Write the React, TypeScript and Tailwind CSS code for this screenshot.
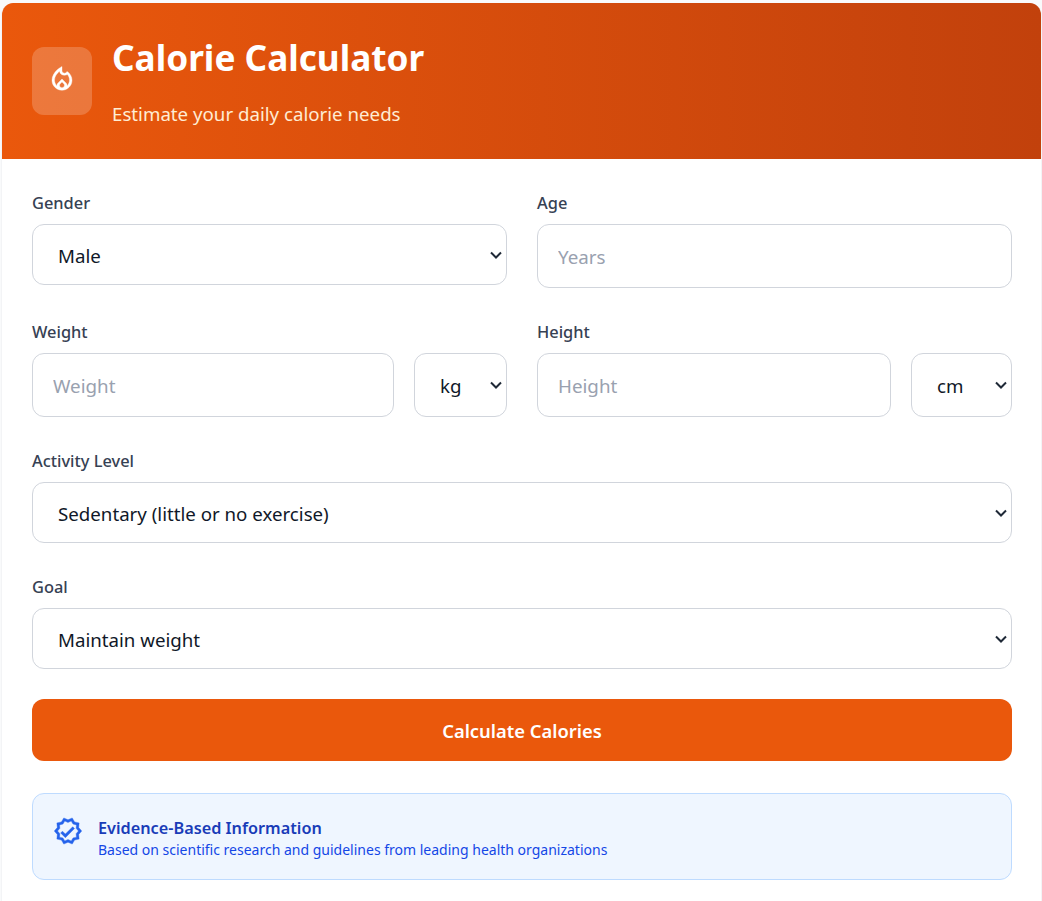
const labelClass = "block mb-[9px] text-[16.4px] leading-6 font-medium text-gray-700";
const fieldClass =
  "w-full h-16 rounded-xl border border-gray-300 bg-white px-5 pt-px text-[18.8px] text-gray-900 placeholder:text-gray-400 outline-none";

function Select({ options, className }: { options: string[]; className: string }) {
  return (
    <div className={"relative shrink-0 " + className}>
      <select className="w-full h-full appearance-none rounded-xl border border-gray-300 bg-white pl-[25px] pr-6 pt-[3px] text-[18.7px] text-gray-900 outline-none">
        {options.map((o) => (
          <option key={o}>{o}</option>
        ))}
      </select>
      <svg
        className="absolute right-[5px] top-1/2 -mt-[4px] pointer-events-none"
        width="12"
        height="8"
        viewBox="0 0 12 8"
        fill="none"
        stroke="#1f2937"
        strokeWidth="2"
      >
        <path d="M1 1.5l5 5 5-5" />
      </svg>
    </div>
  );
}

function FlameIcon() {
  return (
    <svg className="w-[30px] h-[30px] -mt-[5px]" viewBox="0 0 24 24" fill="#fff" stroke="#fff" strokeWidth="0.3">
      <path d="M16 6l-.44.55C14.38 8.02 12 7.19 12 5.3V2S4 6 4 13c0 4.42 3.58 8 8 8s8-3.58 8-8c0-2.96-1.61-5.62-4-7zm-4 13c-1.1 0-2-.87-2-1.94 0-.51.2-.97.58-1.34L12 14.33l1.43 1.39c.37.37.57.83.57 1.34 0 1.07-.9 1.94-2 1.94zm3.96-1.5c.04-.36.22-1.25-.57-2.02L12 12l-3.39 3.48c-.79.77-.61 1.67-.57 2.02C6.8 16.33 6 14.76 6 13c0-3.16 2.13-5.65 4.03-7.25.23 1.99 1.93 3.25 3.97 3.25.78 0 1.54-.19 2.2-.54C17.34 9.39 18 11.14 18 13c0 1.76-.8 3.33-2.04 4.5z" />
    </svg>
  );
}

function VerifiedIcon() {
  return (
    <svg className="w-[30px] h-[30px] -mt-[11px] shrink-0" viewBox="0 0 24 24" fill="#2563eb" stroke="#2563eb" strokeWidth="0.3">
      <path d="m23 12-2.44-2.78.34-3.68-3.61-.82-1.89-3.18L12 3 8.6 1.54 6.71 4.72l-3.61.81.34 3.68L1 12l2.44 2.78-.34 3.69 3.61.82 1.89 3.18L12 21l3.4 1.46 1.89-3.18 3.61-.82-.34-3.68L23 12zm-4.51 2.11.26 2.79-2.74.62-1.43 2.41L12 18.82l-2.58 1.11-1.43-2.41-2.74-.62.26-2.8L3.66 12l1.85-2.12-.26-2.78 2.74-.61 1.43-2.41L12 5.18l2.58-1.11 1.43 2.41 2.74.62-.26 2.79L20.34 12l-1.85 2.11zm-8.6.32-2.32-2.33-1.48 1.48 3.8 3.81 7.34-7.36-1.48-1.48-5.86 5.88z" />
    </svg>
  );
}

export default function App() {
  return (
    <div className="h-[901px] overflow-hidden bg-gray-50 pt-[3px] pl-px font-['Noto_Sans',sans-serif]">
      <div className="bg-white rounded-t-xl overflow-hidden border-x border-gray-100">
        <div className="h-[156px] bg-gradient-to-r from-[#ea580c] to-[#c2410c] px-[30px] flex items-center gap-5">
          <div className="w-[60px] h-[68px] rounded-xl bg-white/20 flex items-center justify-center">
            <FlameIcon />
          </div>
          <div className="pt-[3px]">
            <h1 className="text-[35.2px] leading-10 font-bold text-white mb-[23px] -mt-[1px]">Calorie Calculator</h1>
            <p className="text-[18.7px] leading-7 text-orange-100">Estimate your daily calorie needs</p>
          </div>
        </div>
        <div className="pl-[30px] pr-[29px] pt-8 pb-8">
          <div className="grid grid-cols-2 gap-x-[30px]">
            <div>
              <label className={labelClass}>Gender</label>
              <Select className="w-full h-[61px]" options={["Male", "Female"]} />
            </div>
            <div>
              <label className={labelClass}>Age</label>
              <input className={fieldClass} placeholder="Years" />
            </div>
          </div>
          <div className="grid grid-cols-2 gap-x-[30px] mt-8">
            <div>
              <label className={labelClass}>Weight</label>
              <div className="flex gap-5">
                <input className={fieldClass + " flex-1 min-w-0"} placeholder="Weight" />
                <Select className="w-[93px] h-16" options={["kg", "lb"]} />
              </div>
            </div>
            <div>
              <label className={labelClass}>Height</label>
              <div className="flex gap-5">
                <input className={fieldClass + " flex-1 min-w-0"} placeholder="Height" />
                <Select className="w-[101px] h-16" options={["cm", "in"]} />
              </div>
            </div>
          </div>
          <div className="mt-8">
            <label className={labelClass}>Activity Level</label>
            <Select className="w-full h-[61px]" options={["Sedentary (little or no exercise)"]} />
          </div>
          <div className="mt-8">
            <label className={labelClass}>Goal</label>
            <Select className="w-full h-[61px]" options={["Maintain weight"]} />
          </div>
          <button className="mt-[30px] w-full h-[62px] rounded-xl bg-[#ea580c] pt-[2px] text-white text-[18.4px] font-semibold">
            Calculate Calories
          </button>
          <div className="mt-8 h-[87px] rounded-xl border border-blue-200 bg-blue-50 px-5 flex items-center gap-[15px]">
            <VerifiedIcon />
            <div className="pt-[2px]">
              <p className="text-[16.25px] leading-6 font-semibold text-blue-800">Evidence-Based Information</p>
              <p className="text-[14px] leading-5 text-blue-700">
                Based on scientific research and guidelines from leading health organizations
              </p>
            </div>
          </div>
        </div>
      </div>
    </div>
  );
}
